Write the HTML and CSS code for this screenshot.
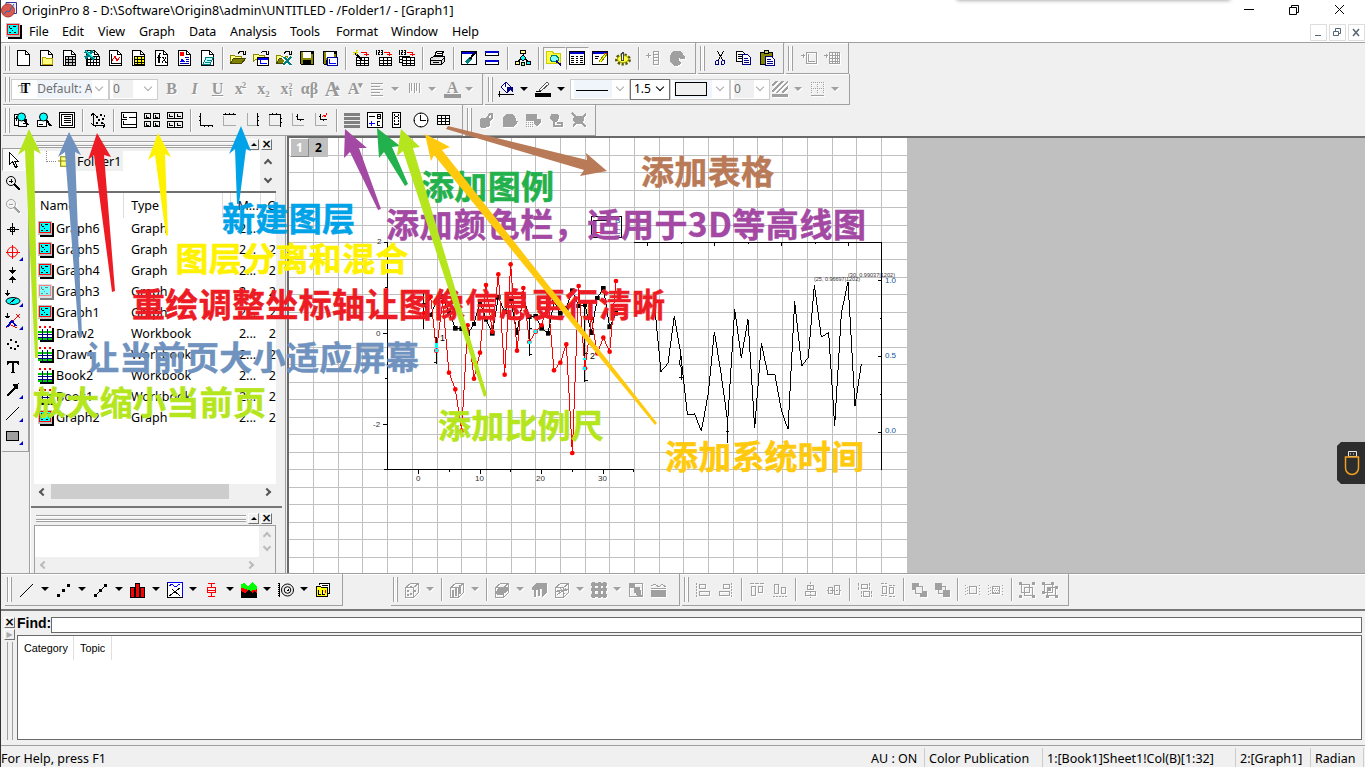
FILE: index.html
```html
<!DOCTYPE html>
<html lang="en">
<head>
<meta charset="utf-8">
<title>OriginPro 8</title>
<link rel="stylesheet" href="styles.css">
</head>
<body>
<svg class="defs" aria-hidden="true">
<marker id="mkred" viewBox="0 0 16 16" markerUnits="userSpaceOnUse" markerWidth="16" markerHeight="16" refX="8" refY="8"><circle cx="8" cy="8" r="7" fill="red" stroke="none"/></marker>
<marker id="mkblack" viewBox="0 0 14 14" markerUnits="userSpaceOnUse" markerWidth="14" markerHeight="14" refX="7" refY="7"><path d="M0 0h14v14H0z" fill="#000" stroke="none"/></marker>
<symbol id="doc" viewBox="0 0 16 16"><path fill="#fff" d="M2.500 .5h8l4 4v11h-12z"/><path d="M10.500 .5v4h4"/></symbol>
<symbol id="docfolder" viewBox="0 0 16 16"><use href="#doc"/><path fill="#ffff80" stroke="#b8a000" d="M4.500 7.500h3l1 1h6v6h-10z"/></symbol>
<symbol id="grid" viewBox="0 0 16 16"><path fill="#fff" d="M3.500 6.500h12v9h-12zM3.500 9.500h12M3.500 12.500h12M6.500 6.500v9M9.500 6.500v9M12.500 6.500v9"/></symbol>
<symbol id="doctable" viewBox="0 0 16 16"><use href="#doc"/><path fill="#ccc" d="M4.500 6.500h10v9h-10zM4.500 9.500h10M4.500 12.500h10M7.500 6.500v9M11.500 6.500v9"/></symbol>
<symbol id="docexcel" viewBox="0 0 16 16"><use href="#doc"/><use href="#grid"/><path stroke="#008080" stroke-width="3" d="M1 1l9 8M9 1L1 8"/><path stroke="#0ff" d="M2 1l9 8"/></symbol>
<symbol id="docgraph" viewBox="0 0 16 16"><use href="#doc"/><path d="M4.500 4v9.500h9"/><path stroke="red" d="M5 11l3-5 2 5 3-4"/></symbol>
<symbol id="docmatrix" viewBox="0 0 16 16"><use href="#doc"/><path fill="#ff0" d="M4.500 6.500h10v8h-10zM4.500 9.500h10M4.500 12.500h10M7.500 6.500v8M11.500 6.500v8"/></symbol>
<symbol id="docfx" viewBox="0 0 16 16"><use href="#doc"/><path d="M8 3.500H6.500V13M4 7.500h4M5.500 5v8M9 7.500h1l3 5h1M13 7.500l-4 5M10 7.500l3 5"/></symbol>
<symbol id="doclayout" viewBox="0 0 16 16"><use href="#doc"/><path stroke="none" fill="red" d="M4 2h4v4H4z"/><path stroke="none" fill="#00f" d="M4 12l2-4 3 4z"/><path stroke="#00a" d="M4 13.500h9M9 7.500h4M10 9.500h3M10 11.500h3"/></symbol>
<symbol id="docnotes" viewBox="0 0 16 16"><use href="#doc"/><path stroke="#008080" fill="#bff" d="M7 7.500h7l-3 7H4zM8 10h4M6 12h5"/></symbol>
<symbol id="open" viewBox="0 0 16 16"><path fill="#ff8" stroke="#880" d="M.500 13V5.500h4l1 1h6V9"/><path fill="#808000" stroke="#440" d="M.500 13.500l3-5h12l-4 5z"/><path d="M8 3.500l2-2h3l1 2M15.500 1v3h-3"/></symbol>
<symbol id="opengraph" viewBox="0 0 16 16"><path fill="#ff8" stroke="#880" d="M.500 11V4.500h5l1 1h5V9H3z"/><path d="M8 2.500l2-1h3l1 2M15.500 1v3h-3"/><path fill="#fff" d="M4.500 7.500h11v8h-11z"/><path stroke="#00f" stroke-width="2" d="M5 8.500h10"/><path stroke="#00f" d="M7 10v3.500h7"/></symbol>
<symbol id="openexcel" viewBox="0 0 16 16"><use href="#open"/><path stroke="#fff" stroke-width="4" d="M7 7l9 9M15 7l-8 9"/><path stroke="#008080" stroke-width="2" d="M8 7l7 8M15 7l-8 8"/></symbol>
<symbol id="save" viewBox="0 0 16 16"><path fill="#880" d="M1.500 1.500h13v13h-12l-1-1z"/><path stroke="none" fill="#fff" d="M4 2h8v6H4z"/><path stroke="none" fill="#000" d="M4 10h8v4H4zM12 2h2v2h-2z"/></symbol>
<symbol id="savegraph" viewBox="0 0 16 16"><use href="#save"/><path fill="#fff" stroke="#00a" d="M5.500 7.500h10v8h-10z"/><path stroke="#00f" d="M7.500 9v4.500H14"/></symbol>
<symbol id="table-in" viewBox="0 0 16 16"><path fill="#fff" d="M3.500 7.500h12v8h-12zM3.500 10.500h12M3.500 13.500h12M7.500 7.500v8M11.500 7.500v8"/><path stroke="red" d="M8 2.500h5.500v3M11 4.500h5"/></symbol>
<symbol id="wiz" viewBox="0 0 16 16"><use href="#table-in"/><path stroke-width="2" d="M2 3l7 7"/><path stroke="#dd0" d="M0 2h5M3 0v5M0 5l5-5"/></symbol>
<symbol id="import" viewBox="0 0 16 16"><use href="#table-in"/><path d="M.500 0v5M2 .500h1.500v2H2v2h2M5 .500h1.500v4H5M5 2.500h2"/></symbol>
<symbol id="imports" viewBox="0 0 16 16"><path fill="#fff" d="M.500 6.500h10v6H.500zM.500 9.500h10M4 6.500v6M7.500 6.500v6"/><use href="#import"/></symbol>
<symbol id="print" viewBox="0 0 16 16"><path fill="#fff" d="M4.500 7l2-6h7l-2 6M7 3.500h5M6 5.500h5"/><path fill="#ddd" d="M.500 8.500l3-2h11v5l-3 3H.500zM.500 10.500h11l3-3M11.500 10.500v4M3 12.500h6"/></symbol>
<symbol id="win" viewBox="0 0 16 16"><path fill="#fff" d="M.500 1.500h15v13H.500z"/><path stroke="#00c" stroke-width="2" d="M1 3h14"/></symbol>
<symbol id="refresh" viewBox="0 0 16 16"><use href="#win"/><path stroke="#008080" stroke-width="3" d="M5 13l5-5"/><path stroke-width="2" d="M9 9l6-8"/></symbol>
<symbol id="dup" viewBox="0 0 16 16"><path fill="#fff" d="M1.500 1.500h13v4h-13zM1.500 10.500h13v4h-13z"/><path stroke="#00c" stroke-width="2" d="M1 2h14M1 11h14"/></symbol>
<symbol id="tree" viewBox="0 0 16 16"><path d="M8 3v5M2 12l6-5 6 5"/><path fill="#ff8" d="M5.500 .500h5v3h-5z"/><path fill="#0ff" d="M8 5l3 3-3 3-3-3z"/><path fill="#ff8" d="M.500 11.500h4v3h-4z"/><path fill="#8f8" d="M6.500 12.500h3v3h-3z"/><path fill="#0ff" d="M11.500 11.500h4v3h-4z"/></symbol>
<symbol id="explorer" viewBox="0 0 16 16"><path fill="#ffff40" stroke="#cc0" d="M.500 1.500h6l1 2h7v10H.500z"/><path fill="#8ff" stroke="#008080" d="M6 5.500h4l2 2v3l-2 1H6l-2-2V8z"/><path stroke="#008" stroke-width="2" d="M10 11l5 4"/></symbol>
<symbol id="results" viewBox="0 0 16 16"><use href="#win"/><path d="M2 6.500h3M7 6.500h2M11 6.500h3M2 8.500h3M7 8.500h2M11 8.500h3M2 10.500h3M7 10.500h2M11 10.500h3M2 12.500h3M7 12.500h2M11 12.500h3"/></symbol>
<symbol id="script" viewBox="0 0 16 16"><use href="#win"/><path d="M3 6.500h4M3 8.500h3"/><path stroke="#880" stroke-width="3" d="M8 12l6-8"/><path stroke="#ff0" d="M8 12l6-8"/><path stroke="red" d="M13 3l2 1"/></symbol>
<symbol id="gear" viewBox="0 0 16 16"><ellipse cx="8" cy="9.500" rx="6" ry="4" fill="#ee3" stroke="#550" stroke-width="4" stroke-dasharray="2 1.500"/><ellipse cx="8" cy="9" rx="5.500" ry="3.500" fill="#ff4" stroke="#aa0"/><path fill="#eee" stroke="#444" d="M6.500 10V3.500l2-1v7.500z"/></symbol>
<symbol id="addcol" viewBox="0 0 16 16"><path d="M0 5.500h5M2.500 3v5M7.500 1.500h5v13h-5zM7.500 4.500h5M7.500 7.500h5M7.500 10.500h5"/></symbol>
<symbol id="recalc" viewBox="0 0 16 16"><path fill="currentColor" d="M1 6l4-5h6l4 5v2h-4L9 6v5l3 2-3 2H5l-4-4z"/></symbol>
<symbol id="cut" viewBox="0 0 16 16"><path d="M4.500 1l5 9M10.500 1l-5 9"/><path stroke="#008" d="M3.500 10.500h2v4h-3v-3zM9.500 10.500h2v3l-1 1h-2v-3z"/></symbol>
<symbol id="copy" viewBox="0 0 16 16"><path fill="#fff" d="M.500 1.500h6l3 3v7h-9zM2 4.500h4M2 6.500h5M2 8.500h5"/><path fill="#fff" stroke="#008" d="M6.500 4.500h5l3 3v7h-8zM8 8.500h4M8 10.500h5M8 12.500h5"/></symbol>
<symbol id="paste" viewBox="0 0 16 16"><path fill="#880" d="M1.500 2.500h12v12h-12z"/><path fill="#cc8" d="M5.500 .500h4v3h-4z"/><path fill="#fff" stroke="#008" d="M6.500 6.500h6l3 3v6h-9zM8 9.500h4M8 11.500h6M8 13.500h6"/></symbol>
<symbol id="addlayer" viewBox="0 0 16 16"><path d="M0 5.500h4M2 3.500v4M5.500 2.500h10v11h-10zM7.500 4v7.500H14"/></symbol>
<symbol id="addtable" viewBox="0 0 16 16"><path d="M0 5.500h4M2 3.500v4M5.500 2.500h10v11h-10zM5.500 5.500h10M5.500 8.500h10M5.500 11.500h10M8.500 2.500v11M11.500 2.500v11M13.500 2.500v11"/></symbol>
<symbol id="zoomin" viewBox="0 0 16 16"><path fill="#fff" d="M6 2.500H1.500v11h4M5.500 7.500h8v7h-8z"/><path d="M1 6.500h4M3.500 4v5M10 11.500h3"/><circle cx="8.500" cy="5" r="4" fill="#0ff"/><path stroke-width="2" d="M11 8l4 5"/></symbol>
<symbol id="zoomout" viewBox="0 0 16 16"><path fill="#fff" d="M1.500 8.500h9v6h-9z"/><path d="M3 12.500h4"/><circle cx="7.500" cy="5" r="4" fill="#0ff"/><path stroke-width="2" d="M10 8l5 6"/></symbol>
<symbol id="whole" viewBox="0 0 16 16"><path fill="#fff" d="M.500 .500h15v15H.500zM2.500 2.500h11v11h-11z"/><path d="M5 4.500h7M5 6.500h7M5 8.500h7M5 10.500h7"/></symbol>
<symbol id="rescale" viewBox="0 0 16 16"><path d="M3.500 1v12.500H15M1 3.500l2-2 3 2M1 11l5 4M13 11l2 2-2 3"/><path stroke-width="2" d="M6 5h2M10 3h2M8 8h2M12 7h2M6 11h2M11 11h2M14 4h1"/></symbol>
<symbol id="extract" viewBox="0 0 16 16"><path fill="#fff" d="M.500 .500h15v15H.500z"/><path d="M2.500 2v3.500h3M8 5.500h7M.500 7.500h5M2.500 9v3.500h12"/></symbol>
<symbol id="layers" viewBox="0 0 16 16"><path d="M.500 1.500h6v5h-6zM9.500 1.500h6v5h-6zM.500 9.500h6v5h-6zM9.500 9.500h6v5h-6zM2.500 3v2H5M11.500 3v2H14M2.500 11v2H5M11.500 11v2H14"/></symbol>
<symbol id="merge" viewBox="0 0 16 16"><path d="M.500 .500h15v6H.500zM.500 9.500h15v6H.500zM7.500 .500v6M7.500 9.500v6M2.500 2v2.500h3M10.500 2v2.500h3M2.500 11v2.500h3M10.500 11v2.500h3"/></symbol>
<symbol id="axl" viewBox="0 0 16 16"><path d="M2.500 1v12.500H15M1 4.500h2M1 8.500h2M6.500 13v2M10.500 13v2M14.500 13v2"/></symbol>
<symbol id="axt" viewBox="0 0 16 16"><path d="M2 2.500h13M4.500 1v2M8.500 1v2M12.500 1v2"/><path stroke="#aaa" d="M2.500 4v9.500h12"/></symbol>
<symbol id="axr" viewBox="0 0 16 16"><path d="M13.500 1v12.500M13 4.500h2M13 8.500h2M13 13.500h2"/><path stroke="#aaa" d="M3.500 1v12.500H13"/></symbol>
<symbol id="axtr" viewBox="0 0 16 16"><path d="M2 2.500h11.500v12M5.500 1v2M9.500 1v2M13 6.500h2M13 10.500h2"/><path stroke="#999" d="M2.500 3v10.500H13"/></symbol>
<symbol id="axin" viewBox="0 0 16 16"><path stroke="#aaa" d="M2.500 1v12.500H14"/><path d="M7.500 2v5.500h6M6 4.500h2M10.500 7v2"/></symbol>
<symbol id="axind" viewBox="0 0 16 16"><use href="#axin"/><path stroke="red" d="M9 5l2-2 1 2 2-4"/></symbol>
<symbol id="color" viewBox="0 0 16 16"><path stroke="#808080" stroke-width="3" d="M0 2.500h16M0 6.500h16M0 10.500h16M0 14.500h16"/></symbol>
<symbol id="legend" viewBox="0 0 16 16"><path fill="#fff" d="M.500 .500h15v15H.500z"/><path d="M2 4.500h6M10.500 2v4h3V2.500h-3M10 4.500h3M13 9.500h-3v4h3"/><path stroke="#00f" d="M2 11.500h6M4.500 9v5"/></symbol>
<symbol id="scale" viewBox="0 0 16 16"><path fill="#fff" d="M2.500 .500h8v15h-8z"/><path stroke-dasharray="2 1" d="M4.500 2v12M8.500 2v12"/><path d="M5 4.500h3M5 12.500h3"/></symbol>
<symbol id="clock" viewBox="0 0 16 16"><circle cx="8" cy="8" r="7" fill="#fff"/><path d="M7.500 3v5.500h5M7.500 1v1M7.500 14v1M1 8.500h1M14 8.500h1"/></symbol>
<symbol id="tablebtn" viewBox="0 0 16 16"><path fill="#fff" d="M1.500 3.500h12v9h-12zM1.500 6.500h12M1.500 9.500h12M5.500 3.500v9M9.500 3.500v9"/></symbol>
<symbol id="m1" viewBox="0 0 16 16"><path fill="currentColor" d="M1 8l2-2h7l1 3-1 5-3 1H2z"/><path stroke-width="2" d="M7 7l5-6M10 2h3v4l-4 4"/></symbol>
<symbol id="m2" viewBox="0 0 16 16"><path fill="currentColor" d="M1 6l4-4h5l3 4v3h3l-4 5H1z"/></symbol>
<symbol id="m3" viewBox="0 0 16 16"><path fill="currentColor" d="M1 2h10v6H1zM9 7h6v4l-3 3-3-3z"/><path stroke-dasharray="1 1" d="M1 10.500h8M1 12.500h8M1 14.500h8"/></symbol>
<symbol id="m4" viewBox="0 0 16 16"><path fill="currentColor" d="M4 2h5l2 3-2 4H5L2 6z"/><path stroke-width="2" d="M6 8v6h3M9 11h5v3H9"/></symbol>
<symbol id="m5" viewBox="0 0 16 16"><path fill="currentColor" d="M4 4h7l2 3-2 4H5L2 8z"/><path stroke-width="2" d="M1 1l14 14M15 2L2 14"/></symbol>
<symbol id="al-l" viewBox="0 0 16 16"><path d="M1 2.500h12M1 5.500h9M1 8.500h12M1 11.500h9M1 14.500h12"/></symbol>
<symbol id="vbars" viewBox="0 0 16 16"><path d="M2.500 2v10M4.500 2v8M7.500 2v10M9.500 2v8M12.500 2v10"/></symbol>
<symbol id="bucket" viewBox="0 0 16 16"><path fill="#fff" stroke="#008" d="M3 6l5-5 6 6-5 5zM7 1v5"/><path fill="#008" stroke="none" d="M9 6h6v6l-3-3-3 2z"/><path d="M0 13.500h16M1.500 10v6"/></symbol>
<symbol id="pen" viewBox="0 0 16 16"><path fill="#fff" stroke="#555" d="M4 9l8-8 2 2-8 7z"/><path d="M1 10.500h5"/><path stroke="none" fill="#000" d="M0 12h16v4H0z"/></symbol>
<symbol id="hatch" viewBox="0 0 16 16"><path stroke-width="1.500" d="M0 5l5-5M0 11L11 0M5 12L16 0M10 12l6-6"/><path fill="currentColor" stroke="none" d="M0 13h16v3H0z"/></symbol>
<symbol id="dgrid" viewBox="0 0 16 16"><path stroke-dasharray="1 1" d="M2.500 1v12M8.500 1v12M14.500 1v12M2 1.500h13M2 7.500h13"/><path d="M2 14.500h13"/></symbol>
<symbol id="arrow" viewBox="0 0 16 16"><path fill="#fff" d="M3.500 .500v12l3-3 3 6 2-1-3-5h4z"/></symbol>
<symbol id="mag" viewBox="0 0 16 16"><circle cx="6" cy="6" r="4.500"/><path d="M4 6.500h4"/><path stroke-width="2" d="M9 9l6 6"/></symbol>
<symbol id="magp" viewBox="0 0 16 16"><use href="#mag"/><path d="M6 4v4"/></symbol>
<symbol id="cross" viewBox="0 0 16 16"><path d="M7.500 2v12M2 8.500h12M5.500 6.500h4v4h-4z"/></symbol>
<symbol id="target" viewBox="0 0 16 16"><g stroke="red"><circle cx="7.500" cy="8" r="5"/><path d="M7.500 1v14M1 8.500h14"/></g></symbol>
<symbol id="datasel" viewBox="0 0 16 16"><path d="M7.500 0v6M7.500 10v6"/><path fill="#000" stroke="none" d="M4 3h7L7.500 7zM4 13h7L7.500 9z"/></symbol>
<symbol id="mask" viewBox="0 0 16 16"><path d="M2.500 0v5M0 3h5L2.500 5z"/><ellipse cx="8" cy="11" rx="7" ry="3.500" fill="#0ff"/><path d="M5 13l6-5"/></symbol>
<symbol id="xmask" viewBox="0 0 16 16"><path d="M2.500 0v5M0 3h5l-2 2z"/><path stroke="red" d="M1 15L15 1M11 1l4 4M4 11l8 4"/><path stroke="#00c" stroke-width="2" d="M2 14l5-6 4 5"/></symbol>
<symbol id="dots" viewBox="0 0 16 16"><path stroke-width="2" d="M5 4h2M10 6h2M2 8h2M12 10h2M5 12h2M9 13h2"/></symbol>
<symbol id="text" viewBox="0 0 16 16"><path fill="#000" stroke="none" d="M2 2h12v4h-1l-1-2H9v9l2 1H5l2-1V4H4L3 6H2z"/></symbol>
<symbol id="aline" viewBox="0 0 16 16"><path stroke-width="1.500" d="M2 14L12 4"/><path fill="#000" d="M8 3l5-1-1 5z"/></symbol>
<symbol id="line" viewBox="0 0 16 16"><path stroke-width="1.300" d="M1 15L14 2"/></symbol>
<symbol id="rect" viewBox="0 0 16 16"><path fill="#a0a0a0" d="M1.500 3.500h12v9h-12z"/></symbol>
<symbol id="scat" viewBox="0 0 16 16"><path fill="currentColor" stroke="none" d="M1 12h3v3H1zM6 7h3v3H6zM11 2h3v3h-3z"/></symbol>
<symbol id="linesym" viewBox="0 0 16 16"><use href="#scat"/><path d="M2 14L13 3"/></symbol>
<symbol id="bars" viewBox="0 0 16 16"><path fill="red" d="M.500 5.500h4v10h-4zM5.500 1.500h4v14h-4zM10.500 5.500h4v10h-4z"/></symbol>
<symbol id="multi" viewBox="0 0 16 16"><path fill="#fff" d="M.500 .500h15v15H.500z"/><path stroke="#00f" d="M15.500 0v15M0 .500h16M2 4l3-2 3 3 5-3"/><path d="M2 14L13 6M5 7l8 7"/></symbol>
<symbol id="box" viewBox="0 0 16 16"><path stroke="red" d="M4 1.500h7M7.500 1v4M3.500 5.500h8v5h-8zM3 8.500h9M7.500 10v4M4 14.500h7"/></symbol>
<symbol id="area" viewBox="0 0 16 16"><path stroke="none" fill="red" d="M0 5h16v10H0z"/><path stroke="none" fill="#0f0" d="M0 6V2l3-1 4 3 4-4 5 5v2l-3 1-5 1-3-2z"/><path stroke="none" fill="#000" d="M0 9l4 2 4-3 3 3 2-2 3 2v5H0z"/></symbol>
<symbol id="polar" viewBox="0 0 16 16"><path stroke-dasharray="1 1" d="M.500 1v14"/><path d="M1.500 1v14"/><circle cx="9.500" cy="8" r="6"/><circle cx="9.500" cy="8" r="3.300"/><path d="M8.500 8.500h2v-2"/></symbol>
<symbol id="tmpl" viewBox="0 0 16 16"><path fill="#fff" d="M4.500 3V1.500h10v10h-2M6.500 3.500h6"/><path fill="#ff0" d="M1.500 4.500h4l1 1h6v9h-11zM3.500 8v4h2M7.500 8v4h2"/><path stroke="red" d="M10.500 8v3"/></symbol>
<symbol id="cube" viewBox="0 0 16 16"><path d="M1.500 5.500l5-4h8v9l-5 5h-8zM1.500 5.500h8v9M9.500 5.500l5-4"/></symbol>
<symbol id="cubes" viewBox="0 0 16 16"><use href="#cube"/><path stroke-width="2" d="M7 4v2M4 8v2M11 8v2M6 12h2M3 13h2"/></symbol>
<symbol id="cubeb" viewBox="0 0 16 16"><use href="#cube"/><path stroke-width="2" d="M4 8v7M7 6v8M11 3v9"/></symbol>
<symbol id="surf" viewBox="0 0 16 16"><use href="#cube"/><path fill="currentColor" d="M2 10l4-5h8v3l-5 4H3z"/></symbol>
<symbol id="wall" viewBox="0 0 16 16"><path fill="currentColor" stroke="none" d="M1 5l5-4h10v9l-5 5V7H9v7H7V8H5v7H3V8H1z"/></symbol>
<symbol id="wire" viewBox="0 0 16 16"><use href="#cube"/><path d="M1 10l14-3M3 8h10M3 13l9-7M6 6l5 6"/></symbol>
<symbol id="contour" viewBox="0 0 16 16"><path stroke-width="3" d="M0 2.500h16M0 7.500h16M0 13.500h16M2.500 0v16M8 0v16M13.500 0v16"/></symbol>
<symbol id="image" viewBox="0 0 16 16"><path d="M1.500 1.500h13v13h-13z"/><path fill="currentColor" d="M2 2h4v3H2zM6 5h5l1 3v4l2 2h-4l-2-3-2-1z"/></symbol>
<symbol id="profile" viewBox="0 0 16 16"><path fill="currentColor" d="M.500 8.500h14v6h-14z"/><path d="M0 4l4-2 4 3 3-3 4 3M0 6.500h15"/></symbol>
<symbol id="left" viewBox="0 0 16 16"><path stroke-dasharray="2 1" d="M1.500 1v14"/><path d="M4.500 2.500h6v4h-6zM4.500 9.500h10v4h-10z"/></symbol>
<symbol id="right" viewBox="0 0 16 16"><path stroke-dasharray="2 1" d="M13.500 1v14"/><path d="M5.500 2.500h6v4h-6zM1.500 9.500h10v4h-10z"/></symbol>
<symbol id="top" viewBox="0 0 16 16"><path stroke-dasharray="4 1" d="M1 1.500h14"/><path d="M2.500 4.500h4v9h-4zM9.500 4.500h4v6h-4z"/></symbol>
<symbol id="bottom" viewBox="0 0 16 16"><path stroke-dasharray="2 1" d="M1 14.500h14"/><path d="M2.500 2.500h4v9h-4zM9.500 5.500h4v6h-4z"/></symbol>
<symbol id="vert" viewBox="0 0 16 16"><path stroke-dasharray="2 1" d="M7.500 0v16"/><path d="M4.500 3.500h6v4h-6zM2.500 9.500h10v4h-10z"/></symbol>
<symbol id="horiz" viewBox="0 0 16 16"><path stroke-dasharray="2 1" d="M1 8.500h14"/><path d="M2.500 5.500h4v6h-4zM8.500 3.500h5v9h-5z"/></symbol>
<symbol id="samew" viewBox="0 0 16 16"><path stroke-dasharray="3 1" d="M1.500 1v7M12.500 1v7M4.500 9v6M14.500 9v6"/><path d="M4.500 2.500h6v4h-6zM6.500 9.500h6v5h-6z"/></symbol>
<symbol id="sameh" viewBox="0 0 16 16"><path stroke-dasharray="3 1" d="M1 1.500h6M9 3.500h6M1 13.500h6M9 14.500h6"/><path d="M2.500 4.500h4v7h-4zM9.500 5.500h4v6h-4z"/></symbol>
<symbol id="front" viewBox="0 0 16 16"><path fill="currentColor" d="M1 1h6v6H1zM9 9h6v5H9z"/><path fill="#f0f0f0" d="M4.500 4.500h7v7h-7z"/></symbol>
<symbol id="back" viewBox="0 0 16 16"><path fill="#f0f0f0" d="M4.500 4.500h7v7h-7z"/><path fill="currentColor" d="M1 1h6v6H1zM9 8h6v6H9z"/></symbol>
<symbol id="gin" viewBox="0 0 16 16"><path d="M4.500 4.500h7v7h-7z"/><path stroke-dasharray="1 2" d="M.500 3v11M14.500 3v11M2.500 5v7"/></symbol>
<symbol id="gout" viewBox="0 0 16 16"><use href="#gin"/><path stroke-dasharray="1 1" d="M5 6.500h6M6 8.500h5M5 10.500h6"/></symbol>
<symbol id="group" viewBox="0 0 16 16"><path d="M2.500 2.500h8v8h-8zM5.500 5.500h8v8h-8z"/><path fill="currentColor" stroke="none" d="M0 0h3v3H0zM13 0h3v3h-3zM0 13h3v3H0zM13 13h3v3h-3z"/></symbol>
<symbol id="ungroup" viewBox="0 0 16 16"><path d="M2.500 2.500h8v8h-8zM5.500 5.500h8v8h-8z"/><path fill="currentColor" stroke="none" d="M0 0h3v3H0zM9 0h3v3H9zM0 9h3v3H0zM13 4h3v3h-3zM4 13h3v3H4zM13 13h3v3h-3zM5 5h4v4H5z"/></symbol>
<symbol id="g" viewBox="0 0 16 16"><path stroke="none" fill="#000" d="M2 2h14v14H2z"/><path stroke="none" fill="#c0c0c0" d="M0 0h14v14H0z"/><path stroke="red" fill="#0ff" d="M1.500 1.500h11v10h-11z"/><path d="M3 9.500h2M3.500 5.500h2M7 3.500h3M6 7.500h1M8 9.500h2M3.500 3v2"/></symbol>
<symbol id="w" viewBox="0 0 16 16"><path stroke="none" fill="#000" d="M2 2h14v14H2z"/><path stroke="none" fill="#fff" d="M0 0h14v14H0z"/><path stroke="#0c0" stroke-width="2" d="M0 6h14M0 13h14"/><path stroke="#008" d="M4.500 3v12M9.500 3v12M0 8.500h14M0 11.500h14"/><path stroke="red" stroke-width="2" stroke-dasharray="2 3" d="M1 1h12"/></symbol>
</svg>

<div class="app">
  <header class="title"><svg class="logo" viewBox="0 0 16 16"><path fill="#eef" stroke="#339" d="M5 .500h10.500v11H5z"/><circle cx="7" cy="8.500" r="6.500" fill="#d85a50" stroke="#a33"/><path d="M3 12l3-3 2 1 5-8" stroke="#26a" fill="none"/></svg><span>OriginPro 8 - D:\Software\Origin8\admin\UNTITLED - /Folder1/ - [Graph1]</span>
    <svg class="winbtns" viewBox="0 0 112 20"><path d="M0 9.500h10M45.500 7.500h7v7h-7zM47.500 7V5.500h7v7H53M91 5l9 9M100 5l-9 9"/></svg></header>
  <nav class="menu"><svg class="i"><use href="#g"/></svg>
    <span style="width:33px">File</span><span style="width:36px">Edit</span><span style="width:41px">View</span><span style="width:50px">Graph</span><span style="width:41px">Data</span><span style="width:60px">Analysis</span><span style="width:46px">Tools</span><span style="width:55px">Format</span><span style="width:61px">Window</span><span>Help</span>
    <svg class="mdi" viewBox="0 0 56 17"><path fill="#fff" stroke="#ddd" d="M.500 .500h16v16H.500zM19.500 .500h16v16h-16zM38.500 .500h16v16h-16z"/><path stroke="#567" d="M5 11.500h6M23.500 7.500h5v4h-5zM25.500 7V4.500h5v5H29" fill="none"/><path stroke="#567" stroke-width="1.500" d="M43 5l6 7M49 5l-6 7"/></svg></nav>

  <div class="row std">
    <div class="tb"><b class="grip"></b>
      <svg class="i"><use href="#doc"/></svg><svg class="i"><use href="#docfolder"/></svg><svg class="i"><use href="#doctable"/></svg><svg class="i"><use href="#docexcel"/></svg><svg class="i"><use href="#docgraph"/></svg><svg class="i"><use href="#docmatrix"/></svg><svg class="i"><use href="#docfx"/></svg><svg class="i"><use href="#doclayout"/></svg><svg class="i"><use href="#docnotes"/></svg><b class="sep"></b>
      <svg class="i"><use href="#open"/></svg><svg class="i"><use href="#opengraph"/></svg><svg class="i"><use href="#openexcel"/></svg><svg class="i"><use href="#save"/></svg><svg class="i"><use href="#savegraph"/></svg><b class="sep"></b>
      <svg class="i"><use href="#wiz"/></svg><svg class="i"><use href="#import"/></svg><svg class="i"><use href="#imports"/></svg><b class="sep"></b><svg class="i"><use href="#print"/></svg><b class="sep"></b>
      <svg class="i"><use href="#refresh"/></svg><svg class="i"><use href="#dup"/></svg><b class="sep"></b><svg class="i"><use href="#tree"/></svg><b class="sep"></b>
      <span class="on"><svg class="i"><use href="#explorer"/></svg></span><span class="on"><svg class="i"><use href="#results"/></svg></span><svg class="i"><use href="#script"/></svg><svg class="i"><use href="#gear"/></svg><b class="sep"></b>
      <svg class="i d"><use href="#addcol"/></svg><svg class="i d"><use href="#recalc"/></svg></div>
    <div class="tb"><b class="grip"></b><svg class="i"><use href="#cut"/></svg><svg class="i"><use href="#copy"/></svg><svg class="i"><use href="#paste"/></svg></div>
    <div class="tb"><b class="grip"></b><svg class="i d"><use href="#addlayer"/></svg><svg class="i d"><use href="#addtable"/></svg></div>
  </div>

  <div class="row">
    <div class="tb fmt"><b class="grip"></b>
      <span class="combo off" style="width:98px"><i class="tt"><em>T</em>T</i><span class="val wide">Default: A</span><i class="chev"></i></span><span class="combo off" style="width:49px"><span class="val zero">0</span><i class="chev"></i></span><b class="gap"></b>
      <i class="fl"><b>B</b></i><i class="fl"><b><em>I</em></b></i><i class="fl"><u>U</u></i><i class="fl">x<sup>2</sup></i><i class="fl">x<sub>2</sub></i><i class="fl">x<span class="stack"><s>2</s><s>1</s></span></i><i class="fl ab">αβ</i><i class="fl big">A<sup>▴</sup></i><i class="fl">A<sup>▾</sup></i><svg class="i d"><use href="#al-l"/></svg><b class="dd d"></b><svg class="i d"><use href="#vbars"/></svg><b class="dd d"></b><i class="fl under">A</i><b class="dd d"></b></div>
    <div class="tb style"><b class="grip"></b><svg class="i"><use href="#bucket"/></svg><b class="dd"></b><svg class="i"><use href="#pen"/></svg><b class="dd"></b>
      <span class="combo off first" style="width:60px"><span class="val"><b class="ln"></b></span><i class="chev"></i></span><span class="combo" style="width:40px"><span>1.5</span><i class="chev"></i></span><span class="combo off" style="width:60px"><span class="val"><b class="bx"></b></span><i class="chev"></i></span><span class="combo off" style="width:40px"><span class="val zero">0</span><i class="chev"></i></span>
      <svg class="i d tight"><use href="#hatch"/></svg><b class="dd d"></b><svg class="i d"><use href="#dgrid"/></svg><b class="dd d"></b></div>
  </div>

  <div class="row">
    <div class="tb r3"><b class="grip"></b><svg class="i"><use href="#zoomin"/></svg><svg class="i"><use href="#zoomout"/></svg><svg class="i"><use href="#whole"/></svg><b class="sep"></b><svg class="i"><use href="#rescale"/></svg><b class="sep"></b><svg class="i"><use href="#extract"/></svg><svg class="i"><use href="#layers"/></svg><svg class="i"><use href="#merge"/></svg><b class="sep"></b>
      <svg class="i"><use href="#axl"/></svg><svg class="i"><use href="#axt"/></svg><svg class="i"><use href="#axr"/></svg><svg class="i"><use href="#axtr"/></svg><svg class="i"><use href="#axin"/></svg><svg class="i"><use href="#axind"/></svg><b class="sep"></b>
      <svg class="i"><use href="#color"/></svg><svg class="i"><use href="#legend"/></svg><svg class="i"><use href="#scale"/></svg><svg class="i"><use href="#clock"/></svg><svg class="i"><use href="#tablebtn"/></svg></div>
    <div class="tb masks"><b class="grip"></b><svg class="i d"><use href="#m1"/></svg><svg class="i d"><use href="#m2"/></svg><svg class="i d"><use href="#m3"/></svg><svg class="i d"><use href="#m4"/></svg><svg class="i d"><use href="#m5"/></svg></div>
  </div>

  <main class="main">
    <aside class="toolcol"><div class="tools">
      <span class="on"><svg class="i"><use href="#arrow"/></svg></span><span><svg class="i"><use href="#magp"/></svg></span><span><svg class="i d"><use href="#mag"/></svg></span><span><svg class="i"><use href="#cross"/></svg></span><span class="sub"><svg class="i"><use href="#target"/></svg></span><span><svg class="i"><use href="#datasel"/></svg></span><span class="sub"><svg class="i"><use href="#mask"/></svg></span><span class="sub"><svg class="i"><use href="#xmask"/></svg></span><span><svg class="i"><use href="#dots"/></svg></span><span><svg class="i"><use href="#text"/></svg></span><span class="sub"><svg class="i"><use href="#aline"/></svg></span><span class="sub"><svg class="i"><use href="#line"/></svg></span><span class="sub"><svg class="i"><use href="#rect"/></svg></span>
    </div></aside>
    <section class="side">
      <div class="dockbar"><b></b><i><em class="tri"></em></i><i>×</i></div>
      <div class="folder"><div class="tree"><span class="branch"></span><svg class="fold" viewBox="0 0 14 12"><path fill="#ffff80" stroke="#880" d="M2.500 1.500h4l1 1h5v8h-10zM0 5.500h12"/></svg><span class="name">Folder1</span></div><div class="vscroll"><i class="chev up"></i><i class="chev"></i></div></div>
      <div class="list">
        <div class="head"><span>Name</span><span>Type</span><span></span><span>M...</span><span>C</span></div>
        <div class="item"><svg class="i"><use href="#g"/></svg><span>Graph6</span><span>Graph</span><span>2...</span><span>2</span></div>
        <div class="item"><svg class="i"><use href="#g"/></svg><span>Graph5</span><span>Graph</span><span>2...</span><span>2</span></div>
        <div class="item"><svg class="i"><use href="#g"/></svg><span>Graph4</span><span>Graph</span><span>2...</span><span>2</span></div>
        <div class="item"><svg class="i pale"><use href="#g"/></svg><span>Graph3</span><span>Graph</span><span>2...</span><span>2</span></div>
        <div class="item"><svg class="i"><use href="#g"/></svg><span>Graph1</span><span>Graph</span><span>2...</span><span>2</span></div>
        <div class="item"><svg class="i"><use href="#w"/></svg><span>Draw2</span><span>Workbook</span><span>2...</span><span>2</span></div>
        <div class="item"><svg class="i"><use href="#w"/></svg><span>Draw1</span><span>Workbook</span><span>2...</span><span>2</span></div>
        <div class="item"><svg class="i"><use href="#w"/></svg><span>Book2</span><span>Workbook</span><span>2...</span><span>2</span></div>
        <div class="item"><svg class="i"><use href="#w"/></svg><span>Book1</span><span>Workbook</span><span>2...</span><span>2</span></div>
        <div class="item"><svg class="i"><use href="#g"/></svg><span>Graph2</span><span>Graph</span><span>2...</span><span>2</span></div>
      </div>
      <div class="hscroll"><i class="chev lt"></i><b></b><i class="chev rt"></i></div>
      <div class="dockbar second"><b></b><i><em class="tri"></em></i><i>×</i></div>
      <div class="mini"><div class="blank"></div><div class="vscroll"><i class="chev up"></i><i class="chev"></i></div><div class="hs"><i class="chev lt"></i><i class="chev rt"></i></div></div>
    </section>
    <section class="work">
      <svg class="page" viewBox="289 138 618 435">
        <path stroke="#c0c0c0" d="M313.500 138v435M338.500 138v435M362.500 138v435M387.500 138v435M412.500 138v435M437.500 138v435M461.500 138v435M486.500 138v435M511.500 138v435M535.500 138v435M560.500 138v435M585.500 138v435M609.500 138v435M634.500 138v435M659.500 138v435M683.500 138v435M708.500 138v435M733.500 138v435M757.500 138v435M782.500 138v435M807.500 138v435M832.500 138v435M856.500 138v435M881.500 138v435M289 155.500h618M289 172.500h618M289 190.500h618M289 207.500h618M289 225.500h618M289 242.500h618M289 259.500h618M289 277.500h618M289 294.500h618M289 312.500h618M289 329.500h618M289 347.500h618M289 364.500h618M289 382.500h618M289 399.500h618M289 417.500h618M289 434.500h618M289 452.500h618M289 469.500h618M289 487.500h618M289 504.500h618M289 522.500h618M289 539.500h618M289 557.500h618"/>
        <path stroke="#000" d="M387.500 242v228M384 469.500h250M384 242.500h4M385 287.500h2M383 333.500h4M385 378.500h2M383 424.500h4M418.500 469v5M449.500 469v3M480.500 469v5M510.500 469v3M541.500 469v5M572.500 469v3M603.500 469v5M633.500 469v3M634 242.500h248M881.500 242v228M647.500 242v4M681.500 242v2M714.500 242v4M748.500 242v2M781.500 242v4M815.500 242v2M848.500 242v4M878 280.500h4M880 318.500h2M878 356.500h4M880 394.500h2M878 432.500h4M591.500 216.500h30v21h-30z"/>
        <g transform="translate(380 230) scale(.33333)" fill="none" stroke-width="3">
          <path stroke="#000" d="M132 190v108M169 320v82M162 322h8M162 398h8M448 260v118M615 225v230M448 295h7M448 374h7M616 372h7M616 453h7"/>
          <path class="black" d="M132 225L152 255 169 215 188 200 207 245 226 295 245 296 263 312 282 282 300 215 318 268 337 310 355 202 374 245 392 210 411 308 430 200 448 260 467 258 485 295 504 310 522 215 541 250 559 235 577 182 596 228 615 225 634 308 652 204 670 174 689 290 708 250"/>
          <path class="red" d="M132 250L152 200 169 362 188 215 207 428 226 478 245 602 263 286 282 446 300 368 318 165 337 305 355 133 374 434 392 103 411 362 430 174 448 336 467 305 485 286 504 210 522 421 541 398 559 343 577 669 596 168 615 415 634 265 652 370 670 323 689 365 708 153"/>
          <path stroke="#0ff" stroke-width="9" d="M169 340v14M169 358v7M448 332v9M467 301v9M615 410v9M615 383v8"/>
        </g>
        <g transform="translate(630 230) scale(.33333)" fill="none" stroke="#000" stroke-width="3"><path d="M75 240L93 425 114 400 133 258 152 370 172 553 194 552 214 603 235 490 253 305 273 430 293 575 314 238 334 384 354 268 374 595 394 340 414 434 435 435 454 540 474 598 494 214 515 408 535 382 553 165 574 321 596 308 614 588 634 250 654 155 675 527 694 403M152 365l-3 40 6 8v38M146 444h12M292 560l2 80M289 605h8"/></g>
        <g class="ctext"><text x="377" y="244">2</text><text x="376" y="336">0</text><text x="373" y="427">-2</text><text x="416" y="481">0</text><text x="475" y="481">10</text><text x="536" y="481">20</text><text x="598" y="481">30</text></g>
        <g class="ctext blue"><text x="885" y="283" textLength="11">1.0</text><text x="885" y="358" textLength="11">0.5</text><text x="885" y="433" textLength="11">0.0</text><text x="615" y="223">B</text><text x="615" y="234">C</text></g>
        <g class="ctext tiny"><text x="814" y="281" textLength="46" lengthAdjust="spacingAndGlyphs">(25, 0.96697|1202)</text><text x="848" y="277" textLength="47" lengthAdjust="spacingAndGlyphs">(30, 0.99037|1202)</text></g>
        <g class="clabel"><text x="440" y="341">1</text><text x="590" y="359">2</text></g>
        <path stroke="red" d="M593 232.500h14"/><path stroke="#000" d="M593 220.500h16"/>
      </svg>
      <div class="tabs"><b>1</b><b>2</b></div>
    </section>
  </main>

  <div class="row bottom">
    <div class="tb plot"><b class="grip"></b><svg class="i"><use href="#line"/></svg><b class="dd"></b><svg class="i"><use href="#scat"/></svg><b class="dd"></b><svg class="i"><use href="#linesym"/></svg><b class="dd"></b><svg class="i"><use href="#bars"/></svg><b class="dd"></b><svg class="i"><use href="#multi"/></svg><b class="dd"></b><svg class="i"><use href="#box"/></svg><b class="dd"></b><svg class="i"><use href="#area"/></svg><b class="dd"></b><svg class="i"><use href="#polar"/></svg><b class="dd"></b><svg class="i"><use href="#tmpl"/></svg></div>
    <div class="tb threed"><b class="grip"></b><svg class="i d"><use href="#cubes"/></svg><b class="dd d"></b><b class="sep"></b><svg class="i d"><use href="#cubeb"/></svg><b class="dd d"></b><b class="sep"></b><svg class="i d"><use href="#surf"/></svg><b class="dd d"></b><svg class="i d"><use href="#wall"/></svg><svg class="i d"><use href="#wire"/></svg><b class="dd d"></b><svg class="i d"><use href="#contour"/></svg><b class="dd d"></b><svg class="i d"><use href="#image"/></svg><svg class="i d"><use href="#profile"/></svg></div>
    <div class="tb align"><b class="grip"></b><svg class="i d"><use href="#left"/></svg><svg class="i d"><use href="#right"/></svg><b class="sep"></b><svg class="i d"><use href="#top"/></svg><svg class="i d"><use href="#bottom"/></svg><b class="sep"></b><svg class="i d"><use href="#vert"/></svg><svg class="i d"><use href="#horiz"/></svg><b class="sep"></b><svg class="i d"><use href="#samew"/></svg><svg class="i d"><use href="#sameh"/></svg><b class="sep"></b><svg class="i d"><use href="#front"/></svg><svg class="i d"><use href="#back"/></svg><b class="sep"></b><svg class="i d"><use href="#gin"/></svg><svg class="i d"><use href="#gout"/></svg><b class="sep"></b><svg class="i d"><use href="#group"/></svg><svg class="i d"><use href="#ungroup"/></svg></div>
  </div>

  <section class="find">
    <div class="findgrip"><i>×</i><i class="dim">▸</i><b></b></div>
    <div class="findbody">
      <div class="findrow"><label>Find:</label><div class="input"></div></div>
      <div class="results"><span class="cat">Category</span><span class="topic">Topic</span></div>
    </div>
  </section>
  <footer class="status"><span class="help">For Help, press F1</span><span class="s1">AU : ON</span><span class="s2">Color Publication</span><span class="s3">1:[Book1]Sheet1!Col(B)[1:32]</span><span class="s4">2:[Graph1]</span><span class="s5">Radian</span></footer>
</div>

<svg class="notes" viewBox="0 0 1365 767">
  <g class="cjk">
    <text x="421" y="199" textLength="133" fill="#22b14c" stroke="#22b14c">添加图例</text>
    <text x="641" y="184" textLength="133" fill="#b97a57" stroke="#b97a57">添加表格</text>
    <text x="386" y="237" textLength="480" fill="#a349a4" stroke="#a349a4">添加颜色栏，适用于3D等高线图</text>
    <text x="222" y="231" textLength="133" fill="#00a2e8" stroke="#00a2e8">新建图层</text>
    <text x="175.500" y="271" textLength="233" fill="#fff200" stroke="#fff200">图层分离和混合</text>
    <text x="132" y="317" textLength="533" fill="#ed1c24" stroke="#ed1c24">重绘调整坐标轴让图像信息更行清晰</text>
    <text x="86" y="369.500" textLength="333" fill="#7092be" stroke="#7092be">让当前页大小适应屏幕</text>
    <text x="33" y="415" textLength="233" fill="#b5e61d" stroke="#b5e61d">放大缩小当前页</text>
    <text x="438" y="438" textLength="166" fill="#b5e61d" stroke="#b5e61d">添加比例尺</text>
    <text x="665" y="469" textLength="199" fill="#ffc90e" stroke="#ffc90e">添加系统时间</text>
  </g>
  <path fill="#b5e61d" d="M29 129L41 154 34 150 38 358 35 358 25 150 18 155z"/>
  <path fill="#7092be" d="M69 132L81 155 75 152 82 337 79 338 65 152 58 157z"/>
  <path fill="#ed1c24" d="M97 133L111 157 104 155 115 291 112 292 94 155 88 160z"/>
  <path fill="#fff200" d="M158 133L171 157 165 154 168 235 166 236 155 155 148 160z"/>
  <path fill="#00a2e8" d="M241 126L251 151 246 149 239 204 237 204 235 149 229 154z"/>
  <path fill="#a349a4" d="M345 129L367 148 359 148 381 209 378 210 350 152 344 158z"/>
  <path fill="#22b14c" d="M377 128L400 146 392 147 408 184 405 186 384 152 379 158z"/>
  <path fill="#b5e61d" d="M401 129L420 147 413 148 487 395 484 397 403 151 397 156z"/>
  <path fill="#ffc90e" d="M425 134L450 147 442 150 657 423 655 425 434 155 431 161z"/>
  <path fill="#b97a57" d="M607 171L586 153 587 160 448 126 446 129 584 170 580 176z"/>
</svg>
<svg class="usb" viewBox="0 0 28 42"><path fill="#2d2d2d" d="M4 0h24v42H4l-4-4V4z"/><path fill="none" stroke="#e8e8e8" d="M11.500 9.500h8v5h-8zM13 12h1M16 12h1"/><path fill="none" stroke="#f0a020" stroke-width="1.500" d="M8.500 15h13v11a6.500 6.500 0 0 1-13 0z"/></svg>
<div class="peek"></div>
</body>
</html>
```
FILE: styles.css
```css
*{box-sizing:border-box}
body{margin:0;width:1365px;height:767px;overflow:hidden;background:#f0f0f0;color:#000;font:12.5px/16px "Noto Sans","Noto Sans CJK SC",sans-serif}
.defs{position:absolute;width:0;height:0}
.app{height:767px;display:flex;flex-direction:column;border-left:1px solid #333}
i,em{font-style:normal}
circle,ellipse{shape-rendering:auto}
.title{height:20px;flex:none;background:#fff;display:flex;align-items:center;padding-right:19px}
.logo{width:16px;height:16px;margin-right:5px}
.title span{font-size:12.5px;letter-spacing:.05px;padding-top:2px}
.winbtns{width:112px;height:20px;margin-left:auto;margin-right:-10px;fill:none;stroke:#000}
.menu{height:23px;flex:none;background:#fff;border-bottom:1px solid #a0a0a0;display:flex;align-items:center;padding-left:3px;letter-spacing:-.1px}
.menu .i{margin:0 6px 0 2px}
.menu span{white-space:nowrap;padding-top:2px}
.menu span:nth-of-type(1){margin-left:1px}
.mdi{width:56px;height:17px;margin-left:auto;margin-right:-1px;fill:none;margin-top:3px}
.i{flex:none;width:16px;height:16px;margin:0 4px 0 3px;fill:none;stroke:currentColor;shape-rendering:crispEdges}
.d{color:#a0a0a0;filter:drop-shadow(1px 1px 0 #fff)}
.row{height:31px;display:flex;flex:none;background:#f0f0f0}
.tb{display:flex;align-items:center;height:31px;border-bottom:1px solid #a0a0a0;border-right:1px solid #a0a0a0;box-shadow:inset 0 1px #fff;padding-right:5px;margin-left:2px;flex:none}
.row>.tb:first-child{padding-right:6px}
.grip{flex:none;width:5px;height:25px;margin:0 1px 0 2px;border-left:1px solid #a0a0a0;border-right:1px solid #a0a0a0;background:linear-gradient(90deg,#fff 0 1px,#f0f0f0 1px 2px,#fff 2px)}
.row .tb+.tb .grip{margin:0 4px 0 2px}
.std .grip{margin-right:2px}
.row.std>.tb:first-child{padding-right:6px}
.row.std .tb+.tb .grip{margin-right:5px}
.row.std .tb+.tb{padding-right:4px}
.row>.fmt.tb{padding-right:4px}
.row .style.tb .grip{margin:0 2px 0 3px}
.style.tb{padding-right:6px}
.first{margin-left:1px}
.sep{flex:none;width:2px;height:23px;margin:0 3px;background:linear-gradient(90deg,#a0a0a0 1px,#fff 1px)}
.on{width:23px;height:23px;display:flex;align-items:center;background:#f8f8f8;border:1px solid;border-color:#a0a0a0 #fff #fff #a0a0a0}
.on .i{margin:0 2px}
.dd{flex:none;width:14px;height:5px}
.dd:before{content:"";display:block;margin-left:1px;width:0;border:4px solid transparent;border-top-color:currentColor;border-bottom:0}
.style .dd:before,.bottom .dd:before{margin-left:2px}
.combo{height:21px;display:flex;align-items:center;justify-content:space-between;background:#fff;border:1px solid #707070;padding:0 6px 0 3px;font-size:12px}
.combo.off{border-color:#ccc;color:#707070}
.val{display:flex;align-items:center;height:18px;width:38px;background:#f0f5fc;overflow:hidden;white-space:nowrap}
.val.zero{width:20px;background:#f0f0f0}
.val.wide{width:55px}
.ln{width:32px;height:1px;background:#000;margin:3px 0 0 2px}
.bx{width:32px;height:14px;border:1px solid #000;background:#f0f0f0;margin-left:1px}
.chev{display:block;flex:none;width:6px;height:6px;border:solid currentColor;border-width:0 1px 1px 0;transform:translateY(-2px) rotate(45deg)}
.off .chev{color:#aaa}
.vscroll .chev,.hscroll .chev,.hs .chev{border-width:0 2px 2px 0}
.chev.up{transform:translateY(2px) rotate(225deg)}
.chev.lt{transform:rotate(135deg)}
.chev.rt{transform:rotate(-45deg)}
.tt{font:bold 14px "Liberation Serif",serif;color:#000;margin:0 3px}
.tt em{font-size:12px;color:#888;margin-right:-5px}
.gap{width:2px}
.fl{flex:none;width:23px;text-align:center;font:bold 16px/20px "Liberation Serif",serif;color:#999;text-shadow:1px 1px #fff;white-space:nowrap}
.fl em{font-style:italic}
.fl sup{font-size:9px;vertical-align:6px;line-height:0;margin-left:-1px}
.fl sub{font-size:9px;vertical-align:-3px;line-height:0}
.stack{display:inline-flex;flex-direction:column;vertical-align:middle;font-size:8px;line-height:7px}
.stack s{text-decoration:none}
.fl.big{font-size:20px}
.fl.big sup{margin-left:-4px}
.fl.under{font-weight:bold;font-size:16px;line-height:13px;border-bottom:4px solid #999;width:17px;margin:0 3px}
.tight{margin-left:2px}
.r3 .grip{margin-right:0}
.r3+.masks{padding-right:4px}
.main{height:438px;display:flex;flex:none;border-bottom:1px solid #a0a0a0}
.toolcol{width:29px;flex:none;border-right:1px solid #a0a0a0;padding:12px 0 0 1px}
.tools{width:27px;height:304px;border-bottom:1px solid #a0a0a0;border-right:1px solid #a0a0a0}
.tools>span{display:flex;align-items:center;width:23px;height:23px;position:relative}
.tools .i{margin:0 3px}
.tools .sub:after{content:"";position:absolute;right:2px;bottom:2px;border:2px solid;border-color:transparent #00c #00c transparent}
.side{width:256px;flex:none;border-right:1px solid #a0a0a0;padding:1px 9px 0 3px;border-left:1px solid #fff}
.dockbar{display:flex;height:14px;align-items:center;gap:2px;padding:0 4px 0 2px}
.dockbar b{flex:1;height:7px;border:1px solid #a0a0a0;border-width:1px 0;background:linear-gradient(#fff 1px,#f0f0f0 1px 3px,#a0a0a0 3px 4px,#fff 4px)}
.dockbar i,.findgrip i{width:11px;height:11px;background:#f0f0f0;border:1px solid;border-color:#fff #707070 #707070 #fff;font:bold 12px/8px "DejaVu Sans",sans-serif;display:flex;justify-content:center;flex:none}
.tri{display:block;margin-top:3px;width:0;height:3px;border:3px solid transparent;border-bottom-color:#000;border-top:0}
.folder{display:flex;height:42px;background:#fff;border-bottom:2px solid #707070}
.tree{flex:1;display:flex;padding-left:12px}
.branch{width:10px;height:11px;border:1px dotted #888;border-width:0 0 1px 1px}
.fold{width:15px;height:13px;margin:4px 2px}
.name{height:20px;background:#f0f0f0;padding:1px 2px;line-height:19px;font-size:12.5px}
.vscroll{width:16px;background:#f0f0f0;display:flex;flex-direction:column;align-items:center;justify-content:space-around;color:#555}
.list{height:291px;background:#fff;overflow:hidden}
.head{display:flex;height:25px;align-items:center}
.head span{border-right:1px solid #ddd;height:25px;line-height:26px;padding-left:6px;overflow:hidden;white-space:nowrap}
.head span:nth-child(1){width:91px}
.head span:nth-child(2){width:100px;padding-left:7px}
.head span:nth-child(3){width:8px;padding:0}
.head span:nth-child(4){width:30px}
.item{height:21.1px;display:flex;align-items:center;white-space:nowrap}
.item .i{margin:0 2px 0 4px}
.item span:nth-of-type(1){width:75px}
.item span:nth-of-type(2){width:108px}
.item span:nth-of-type(3){width:30px}
.pale{opacity:.5}
.hscroll{height:15px;display:flex;align-items:center;padding:0 6px;color:#555}
.hscroll b{width:178px;height:15px;background:#cdcdcd;margin-left:5px;margin-right:auto}
.second{margin:7px -6px 0 -3px;padding:4px 10px 0 5px;height:19px;border-top:2px solid #777}
.mini{height:48px;border:1px solid #a0a0a0;border-bottom:0;display:grid;grid-template:31px 15px/1fr 16px;color:#bbb}
.mini .vscroll{color:#bbb}
.blank{background:#fff}
.hs{display:flex;align-items:center;justify-content:space-between;padding:0 6px}
.work{flex:1;background:#c0c0c0;border-top:2px solid #696969;border-left:2px solid #696969;margin-left:1px;position:relative;overflow:hidden}
.page{display:block;width:618px;height:435px;background:#fff;shape-rendering:crispEdges;fill:none}
.black{stroke:#000;marker:url(#mkblack)}
.red{stroke:red;fill:none;marker:url(#mkred)}
.ctext{font:8px "Liberation Sans",sans-serif;fill:#333}
.blue{fill:#159}
.tiny{font-size:6px}
.clabel{font:9px "Liberation Sans",sans-serif;fill:#000}
.tabs{position:absolute;left:1px;top:0;display:flex}
.tabs b{width:19px;height:19px;background:#c0c0c0;font:bold 12px/20px "Noto Sans",sans-serif;text-align:center}
.tabs b:first-child{color:#fff;border:1px solid;border-color:#fff #888 #888 #fff;line-height:17px}
.bottom{height:35px;box-shadow:inset 0 1px #fff}
.bottom .tb{height:32px}
.bottom>.plot{margin-left:4px;width:338px}
.bottom .plot .grip{margin-right:4px}
.bottom .threed{margin-left:48px;width:289px}
.bottom .tb+.tb .grip{margin-right:3px}
.bottom .threed+.align{padding-right:6px}
.find{height:136px;flex:none;border-top:2px solid #777;display:flex}
.findgrip{width:16px;padding:6px 2px 0 3px;display:flex;flex-direction:column;align-items:center}
.findgrip .dim{color:#aaa;margin-top:1px}
.findgrip b{width:6px;flex:1;border:1px solid #a0a0a0;border-width:0 1px;margin:2px 0 5px}
.findbody{flex:1;padding-right:3px}
.findrow{display:flex;height:24px;padding-top:6px}
.findrow label{width:34px;font:bold 14px/13px "Liberation Sans",sans-serif}
.input{flex:1;height:16px;background:#fff;border:1px solid #696969}
.results{height:105px;background:#fff;border:1px solid #696969;display:flex;font:10.8px/25px "Liberation Sans",sans-serif}
.results span{height:24px;border-right:1px solid #e0e0e0;padding-left:6px}
.cat{width:56px}
.topic{width:38px}
.status{flex:1;border-top:1px solid #a0a0a0;display:flex;line-height:25px;white-space:nowrap}
.help{width:870px}
.status span+span{border-right:1px solid #ccc;margin-top:2px;line-height:21px}
.s1{width:54px}
.s2,.s3,.s4,.s5{padding-left:4px}
.s2{width:118px}
.s3{width:193px}
.s4{width:75px}
.s5{width:53px}
.notes{position:absolute;left:0;top:0;width:1365px;height:767px;pointer-events:none}
.cjk{font:bold 33px "Noto Sans CJK SC",sans-serif;stroke-width:.5px}
.usb{position:absolute;left:1337px;top:442px;width:28px;height:42px}
.peek{position:absolute;left:957px;top:-4px;width:273px;height:4px;box-shadow:0 0 4px #888}
```
